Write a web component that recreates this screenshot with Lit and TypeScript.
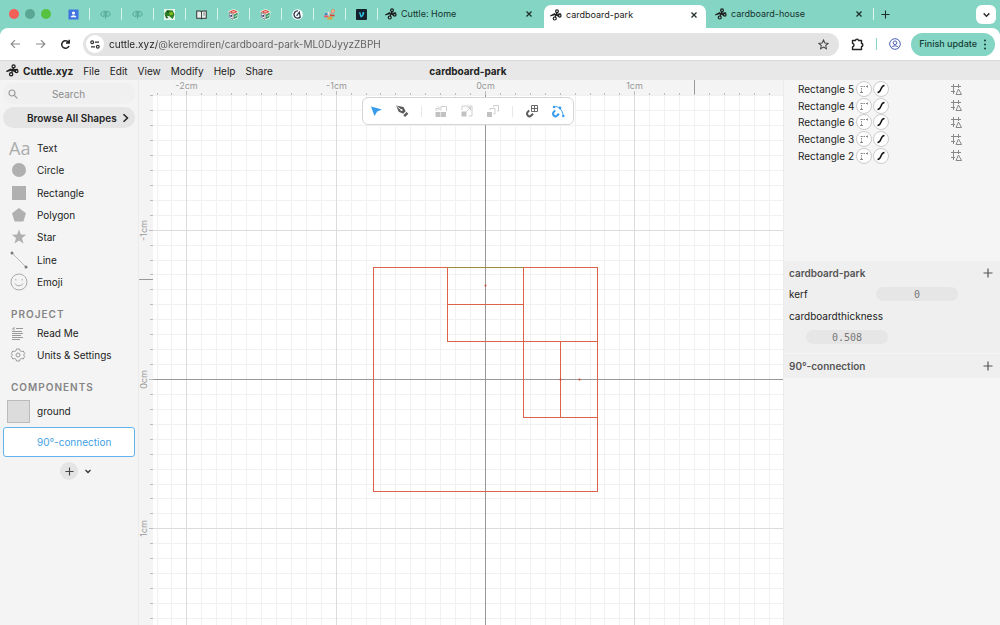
import { LitElement, html, svg, css } from "lit";
import { customElement, state } from "lit/decorators.js";

const scissors = (size: number) => html`<svg class="ico" width=${size} height=${size} viewBox="0 0 24 24" fill="none" stroke="#1d1d1d" stroke-width="2.4" stroke-linecap="round" aria-hidden="true">
  <circle cx="14" cy="4.400" r="2.800" /><circle cx="9.500" cy="19" r="3" />
  <path d="M1.500 13.500 11 11 21 9.800M14 7.200 12 11l-1.500 5M1.500 13.500 9 9.500" />
  <path d="M12 11l5 3" stroke-width="3" /><circle cx="19.500" cy="13.500" r="2.600" />
</svg>`;

const cross = html`<svg class="ico" width="8" height="8" viewBox="0 0 8 8" stroke="#1f2f2b" stroke-width="1.300" aria-hidden="true"><path d="M1.500 1.500l5 5M6.500 1.500l-5 5" /></svg>`;
const plus = (c: string, s = 10) => html`<svg class="ico" width=${s} height=${s} viewBox="0 0 10 10" stroke=${c} stroke-width="1.200" aria-hidden="true"><path d="M5 .5v9M.5 5h9" /></svg>`;
const chevron = (s: number) => html`<svg class="ico" width=${s} height=${s} viewBox="0 0 8 8" fill="none" stroke="#333" stroke-width="1.300" aria-hidden="true"><path d="M1.500 3 4 5.500 6.500 3" /></svg>`;

const wing = svg`<g fill="none" stroke="#5bb09c" stroke-width="1.200"><path d="M6 2v8.500M6 3.500C4 1 1.500 3.500 .8 6 2.500 9 5 8 6 7 7 8 9.500 9 11.200 6 10.500 3.500 8 1 6 3.500z"/><circle cx="6" cy="5.500" r="1.800"/></g>`;
const cube = svg`<path d="M6 0l5.500 2.400L10.800 10 6 12.200 1.200 10 .5 2.400z" fill="#f5fffc"/><path d="M6 .8l4.800 2.200L6 5.200 1.200 3z" fill="#e0483a"/><path d="M1.300 3.800 5.600 5.900V11.300L1.800 9.300z" fill="#fff" stroke="#444" stroke-width=".7"/><path d="M10.700 3.800 6.400 5.900V11.300L10.200 9.300z" fill="#3c9a68"/><circle cx="3.500" cy="7.500" r="1.100" fill="#2a3f86"/><path d="M7.500 8.500l2-2" stroke="#fff"/><path d="M4.500 3h3" stroke="#fff" stroke-width=".9"/>`;

const pinned: { name: string; art: unknown }[] = [
  { name: "Contacts", art: svg`<rect x=".5" y=".5" width="11" height="11" rx="1" fill="#3f73e0"/><circle cx="6" cy="4.400" r="1.700" fill="#fff"/><path d="M2.800 9c.6-3 5.800-3 6.400 0z" fill="#fff"/>` },
  { name: "Wing one", art: wing },
  { name: "Wing two", art: wing },
  { name: "Leaf", art: svg`<rect width="12" height="12" fill="#e9f8ee"/><path d="M.5 5l3-4 6 .5 2 4.500-2 5-4-3.500-4 1z" fill="#2e7d27"/><path d="M5 4l4-1 1 3-3 1z" fill="#86b91e"/><path d="M2 7l3 3H2zM3 2l3 1-2 2z" fill="#1b4e1b"/>` },
  { name: "Book", art: svg`<path d="M.8 2.200h4L6 3l1.200-.8h4V10H7.200L6 10.800 4.800 10h-4z" fill="#e8f1ee" stroke="#333" stroke-width="1.100"/><path d="M6 3v7.500" stroke="#333"/><path d="M7.800 4.500h2M7.800 6.500h2" stroke="#555" stroke-width=".8"/>` },
  { name: "Cube one", art: cube },
  { name: "Cube two", art: cube },
  { name: "Compass", art: svg`<circle cx="6" cy="6" r="5.800" fill="#fff"/><path d="M6.500 2A4 4 0 1 0 9.300 8.500" fill="none" stroke="#26344a" stroke-width="1.500"/><path d="M5 7.500 8 3.500 9 8.500" fill="none" stroke="#26344a" stroke-width="1.300"/>` },
  { name: "Blocks", art: svg`<path d="M1 4.500h3v2H1z" fill="#3a84c9"/><path d="M0 7h5v2H0z" fill="#e8586a"/><path d="M3.500 9h3v2.500h-3z" fill="#e0a52f"/><path d="M4 3h2v4H4z" fill="#e8d9d4"/><path d="M6.500 6h5v2h-5z" fill="#d8473b"/><path d="M6.500 8.500h2.500v3H6.500z" fill="#e0a52f"/><circle cx="9.800" cy="2.300" r="1.600" fill="#f7d0b8" stroke="#f0785a"/><path d="M6.500 6l2-2.500" stroke="#f0785a"/>` },
  { name: "Video", art: svg`<rect width="12" height="12" rx="1" fill="#14202b"/><path d="M3 4l1.600-.8L6 7.200C7.300 5.500 7.300 4.800 6.500 4.500 7.200 3 9.200 2.800 9 4.700 8.800 6.500 6.800 9.300 5.500 9.200 4.500 9 4.200 5.500 3 4z" fill="#2cc0e8"/>` },
];

const shapes: { name: string; art: unknown }[] = [
  { name: "Text", art: html`<span class="aa" aria-hidden="true">Aa</span>` },
  { name: "Circle", art: html`<svg width="20" height="20" aria-hidden="true"><circle cx="10" cy="10" r="7" fill="#b0b0b0" /></svg>` },
  { name: "Rectangle", art: html`<svg width="20" height="20" aria-hidden="true"><rect x="3" y="3" width="14" height="14" fill="#b0b0b0" /></svg>` },
  { name: "Polygon", art: html`<svg width="20" height="20" aria-hidden="true"><path d="M10 3l7 5.200L14.400 16.500H5.600L3 8.200z" fill="#b0b0b0" /></svg>` },
  { name: "Star", art: html`<svg width="20" height="20" aria-hidden="true"><path d="M10 2.500l1.900 5 5.300.3-4.200 3.300 1.500 5.300L10 13.500l-4.500 2.900L7 11.100 2.800 7.800l5.300-.3z" fill="#b0b0b0" /></svg>` },
  { name: "Line", art: html`<svg width="20" height="20" aria-hidden="true"><path d="M3 3l14 14" stroke="#b8b8b8" /><circle cx="3" cy="3" r="1.500" fill="#777" /><circle cx="17" cy="17" r="1.500" fill="#777" /></svg>` },
  { name: "Emoji", art: html`<svg width="20" height="20" fill="none" stroke="#aaa" aria-hidden="true"><circle cx="10" cy="10" r="8" /><path d="M6 11.500c1.500 3 6.500 3 8 0M6 7.800h1.500M12.500 7.800h1.500" /></svg>` },
];

const STEP = 14.93;
const ORIGIN = { x: 346.5, y: 299.5 };
const ticks = Array.from({ length: 241 }, (_, i) => i - 80);
const at = (i: number) => Math.round(i * STEP);

@customElement("app-root")
export class AppRoot extends LitElement {
  @state() private tool = "select";
  @state() private component = "90°-connection";

  static styles = css`
    :host { display: flex; flex-direction: column; height: 100vh; overflow: hidden; background: #f5f5f5; color: #222; font: 10px/14px Inter, "Open Sans", sans-serif; }
    *, *::before, *::after { box-sizing: border-box; }
    button { font: inherit; color: inherit; border: 0; background: none; padding: 0; margin: 0; display: flex; align-items: center; }
    a { color: inherit; text-decoration: none; }
    input { font: inherit; color: inherit; border: 0; outline: 0; margin: 0; padding: 0; min-width: 0; }
    svg { display: block; flex: none; }
    h1, h2, ul { margin: 0; padding: 0; font: inherit; list-style: none; }

    .strip { flex: none; display: flex; height: 34px; margin-bottom: -6px; background: #84d5c4; font-size: 9px; }
    .lights { display: flex; gap: 6px; padding: 9px 0 0 9px; width: 57px; }
    .light { width: 10px; height: 10px; border-radius: 50%; background: #f25f58; }
    .light.idle { background: #5aa695; }
    .light.go { background: #57c23f; }
    .pins { display: flex; height: 28px; }
    .pin { width: 32px; justify-content: center; position: relative; }
    .pin::after { content: ""; width: 1px; height: 12px; background: #d6f2ec; position: absolute; right: -1px; top: 8px; }
    .tabs { display: flex; }
    .tab { width: 164px; height: 28px; display: flex; align-items: center; gap: 4px; padding: 0 7px 0 9px; color: #16332d; }
    .tab:first-of-type { width: 167px; padding-right: 11px; padding-left: 8px; }
    .tab a { flex: 1; }
    .tab.on { width: 162px; padding: 0 8px 5px 6px; background: #fff; height: 24px; margin-top: 5px; border-radius: 7px 7px 0 0; color: #222; }
    .more { display: flex; height: 28px; align-items: center; gap: 7px; padding-left: 3px; }
    .bar { width: 1px; height: 12px; background: #e1f6f1; }
    .menu { margin: 5px 4px 0 auto; width: 20px; height: 19px; border-radius: 6px; background: #fff; justify-content: center; }

    .nav { flex: none; position: relative; display: flex; align-items: center; height: 32px; padding: 0 5px 0 10px; background: #fff; border-radius: 8px 8px 0 0; }
    .steps { display: flex; gap: 14px; width: 73px; }
    .addr { flex: 1; display: flex; align-items: center; height: 23px; gap: 5px; padding: 0 10px 0 3px; border-radius: 12px; background: #e3e3e3; }
    .site { width: 18px; height: 18px; border-radius: 50%; background: #fff; justify-content: center; }
    .url { flex: 1; height: 18px; background: linear-gradient(90deg, #222 48px, #5c5c5c 48px); background-clip: text; -webkit-background-clip: text; color: transparent; }
    .exts { display: flex; align-items: center; gap: 12px; padding: 0 10px 0 12px; }
    .exts .bar { background: #84d5c4; }
    .update { height: 23px; padding: 0 8px 0 8px; gap: 6px; border-radius: 12px; background: #84d5c4; font-size: 9px; font-weight: 500; color: #143d34; }

    .app { flex: none; display: grid; grid-template-columns: 153px 1fr 217px; align-items: center; height: 20px; border-top: 1px solid #d9d9d9; background: #e8e8e8; }
    .menus { grid-area: 1 / 1 / 2 / 3; display: flex; align-items: center; gap: 10px; padding-left: 6px; }
    .brand { display: flex; align-items: center; gap: 4px; font-weight: 700; }
    .title { grid-area: 1 / 2; justify-self: center; font-weight: 700; }

    .main { flex: 1; min-height: 0; display: grid; grid-template-columns: 138px 1fr 217px; }
    .side { display: flex; flex-direction: column; padding: 3px 3px 0; background: #f4f4f4; }
    .find { display: flex; align-items: center; height: 21px; padding: 0 5px; border-radius: 11px; background: #f0f0f0; }
    .find input { flex: 1; background: none; text-align: center; }
    .find input::placeholder { color: #8c8c8c; }
    .browse { height: 21px; margin-top: 3px; padding: 0 6px 0 24px; justify-content: space-between; border-radius: 11px; background: #e5e5e5; font-weight: 600; }
    .shapes { display: grid; grid-auto-rows: 1fr; height: 156px; margin-top: 9px; }
    .row { width: 100%; height: 100%; gap: 8px; padding-left: 6px; text-align: left; }
    .row > :first-child { width: 20px; flex: none; }
    .aa { font: 400 18px/20px "Open Sans", sans-serif; color: #acacac; }
    .head { margin: 14px 0 1px 8px; font-weight: 600; letter-spacing: 1px; color: #858585; }
    .proj { display: grid; grid-auto-rows: 22px; }
    .comps { display: grid; gap: 1px; padding-top: 1px; }
    .comp { width: 132px; height: 30px; padding-left: 33px; border: 1px solid transparent; border-radius: 3px; }
    .comp.on { background: #fff; border-color: #63b3ef; color: #3f9fe5; }
    .thumb { width: 23px; height: 23px; margin: 0 7px 0 -30px; border: 1px solid #bbb; background: #dcdcdc; }
    .add { display: flex; align-items: center; justify-content: center; gap: 6px; margin-top: 5px; padding-left: 14px; }
    .round { width: 18px; height: 18px; border-radius: 50%; background: #e4e4e4; justify-content: center; }

    .canvas { position: relative; overflow: hidden; border-left: 1px solid #ececec; background: #fff; }
    .sheet { width: 100%; height: 100%; position: absolute; inset: 0; }
    .sheet text { font: 9px Inter, sans-serif; fill: #999; text-anchor: middle; }
    .float { position: absolute; inset: 17px 0 auto 14px; display: flex; justify-content: center; }
    .tools { display: flex; align-items: center; width: 212px; height: 28px; padding-right: 2px; border: 1px solid #d5d5d5; border-radius: 6px; background: #fff; }
    .tools button { width: 26px; height: 26px; justify-content: center; color: #c2c2c2; }
    .tools .dark { color: #5c5c5c; }
    .tools .blue { color: #369bec; }
    .split { flex: 1; display: flex; justify-content: center; }
    .split::before { content: ""; width: 1px; height: 11px; background: #e8e8e8; }

    .panel { display: flex; flex-direction: column; border-left: 1px solid #ececec; background: #f5f5f5; }
    .layers { display: grid; grid-auto-rows: 1fr; height: 84px; padding: 1px 0 0 14px; margin-bottom: 97px; }
    .layer { display: flex; align-items: center; gap: 1px; }
    .layer .name { width: 57px; }
    .disc { width: 16px; height: 16px; border: 1px solid #ccc; border-radius: 50%; background: #fff; justify-content: center; }
    .snap { margin: 0 38px 0 auto; }
    .group { background: #efefef; padding: 0 7px 0 5px; }
    .group + .group { border-top: 1px solid #f5f5f5; }
    .cap { display: flex; justify-content: space-between; align-items: center; height: 24px; font-weight: 600; color: #555; }
    .field { display: flex; flex-wrap: wrap; align-items: center; }
    .field label { width: 87px; line-height: 18px; }
    .field input { width: 82px; height: 14px; border-radius: 7px; background: #e6e6e6; text-align: center; font: 10px "DejaVu Sans Mono", monospace; color: #777; }
    .field.wide { padding: 4px 0 9px; row-gap: 5px; }
    .field.wide label { width: 100%; }
    .field.wide input { margin-left: 17px; }
  `;

  private pick(tool: string) { this.tool = tool; }

  private toolButton(id: string, label: string, cls: string, art: unknown) {
    return html`<button class=${cls} aria-label=${label} aria-pressed=${this.tool === id} @click=${() => this.pick(id)}>
      <svg width="14" height="14" viewBox="0 0 14 14" fill="none" stroke="currentColor" aria-hidden="true">${art}</svg></button>`;
  }

  private sheet() {
    return html`<svg class="sheet" role="img" aria-label="Drawing canvas">
      <g transform="translate(${ORIGIN.x} ${ORIGIN.y})">
        ${ticks.map((i) => i % 10 ? svg`<path d="M${at(i)} -400V4000M-400 ${at(i)}H4000" stroke="#f1f1f1"/>` : "")}
        ${ticks.map((i) => i % 10 === 0 && i ? svg`<path d="M${at(i)} -400V4000M-400 ${at(i)}H4000" stroke="#dcdcdc"/>` : "")}
        <path d="M0 -400V4000M-400 0H4000" stroke="#989898" />
        <g fill="none" stroke="#dc6248">
          <rect x="-112" y="-112" width="224" height="224" />
          <rect x="-38" y="-112" width="76" height="74" />
          <rect x="38" y="-38" width="74" height="76" />
          <rect x="-38" y="-112" width="76" height="37" />
          <rect x="75" y="-38" width="37" height="76" />
          <path d="M-38 -112H38" stroke="#a08a3c" />
        </g>
        <g fill="#c8452c"><circle cx="0" cy="-94" r="1" /><circle cx="94" cy="0" r="1" /><circle cx="75" cy="0" r="1" /></g>
      </g>
      <rect width="100%" height="15" fill="#f4f4f4" />
      <rect width="14" height="100%" fill="#f4f4f4" />
      <g stroke="#bdbdbd">
        ${ticks.map((i) => svg`${at(i) + ORIGIN.x > 14 ? svg`<path d="M${at(i) + ORIGIN.x} ${i % 10 ? 13 : 11}v${i % 10 ? 2 : 4}"/>` : ""}${at(i) + ORIGIN.y > 15 ? svg`<path d="M${i % 10 ? 11 : 10} ${at(i) + ORIGIN.y}H14"/>` : ""}`)}
      </g>
      <path d="M555.500 0V14M0 199.500H14" stroke="#999" />
      ${[-2, -1, 0, 1].map((n) => svg`<text x=${at(n * 10) + ORIGIN.x} y="9">${n}cm</text>`)}
      ${[-1, 0, 1].map((n) => svg`<text transform="translate(8 ${at(n * 10) + ORIGIN.y}) rotate(-90)">${n}cm</text>`)}
    </svg>`;
  }

  render() {
    return html`
      <header class="strip">
        <div class="lights"><span class="light"></span><span class="light idle"></span><span class="light go"></span></div>
        <div class="pins">${pinned.map((p) => html`<button class="pin" aria-label=${p.name}><svg width="11" height="11" viewBox="0 0 12 12" aria-hidden="true">${p.art}</svg></button>`)}</div>
        <nav class="tabs">
          ${["Cuttle: Home", "cardboard-park", "cardboard-house"].map((t, i) => html`<div class="tab ${i === 1 ? "on" : ""}">${scissors(12)}<a href="#">${t}</a><button aria-label="Close ${t}">${cross}</button></div>`)}
        </nav>
        <div class="more"><span class="bar"></span><button aria-label="New tab">${plus("#1f2f2b", 9)}</button></div>
        <button class="menu" aria-label="Search tabs">${chevron(9)}</button>
      </header>

      <div class="nav">
        <div class="steps">
          <button aria-label="Back"><svg width="11" height="10" fill="none" stroke="#8b8b8b" stroke-width="1.200" aria-hidden="true"><path d="M10 5H1.500M5 1.200 1.200 5 5 8.800" /></svg></button>
          <button aria-label="Forward"><svg width="11" height="10" fill="none" stroke="#8b8b8b" stroke-width="1.200" aria-hidden="true"><path d="M1 5h8.500M6 1.200 9.800 5 6 8.800" /></svg></button>
          <button aria-label="Reload"><svg width="11" height="11" viewBox="0 0 11 11" fill="none" stroke="#222" stroke-width="1.500" aria-hidden="true"><path d="M9 7A3.800 3.800 0 1 1 8.500 3.200M9.200 .8v3.200H6" /></svg></button>
        </div>
        <div class="addr">
          <button class="site" aria-label="Site information"><svg width="10" height="9" fill="none" stroke="#333" stroke-width="1.200" aria-hidden="true"><circle cx="2.200" cy="2.200" r="1.400" /><path d="M5 2.200h4M1 6.800h4" /><circle cx="7.800" cy="6.800" r="1.400" /></svg></button>
          <input class="url" aria-label="Address" value="cuttle.xyz/@keremdiren/cardboard-park-ML0DJyyzZBPH" />
          <button aria-label="Bookmark"><svg width="11" height="11" viewBox="0 0 12 12" fill="none" stroke="#444" stroke-width="1.100" aria-hidden="true"><path d="M6 1l1.500 3.300 3.600.4-2.700 2.400.8 3.500L6 8.800l-3.200 1.800.8-3.500L.9 4.700l3.600-.4z" /></svg></button>
        </div>
        <div class="exts">
          <button aria-label="Extensions"><svg width="13" height="13" viewBox="0 0 13 13" fill="none" stroke="#222" stroke-width="1.400" stroke-linejoin="round" aria-hidden="true"><path d="M1.500 2.500H4.500C4.500 .6 7.500 .6 7.500 2.500H10.500V5.500C12.300 5.500 12.300 8.500 10.500 8.500V11.500H1.500V9C3.500 8.500 3.500 5.700 1.500 5.200z" /></svg></button>
          <span class="bar"></span>
          <button aria-label="Profile"><svg width="12" height="12" viewBox="0 0 12 12" fill="none" stroke="#4a62b5" aria-hidden="true"><circle cx="6" cy="6" r="5.300" /><circle cx="6" cy="4.800" r="1.800" /><path d="M2.500 9.500c1.500-2.200 5.500-2.200 7 0" /></svg></button>
        </div>
        <button class="update">Finish update<svg width="4" height="11" fill="#143d34" aria-hidden="true"><circle cx="2" cy="1.500" r="1" /><circle cx="2" cy="5.500" r="1" /><circle cx="2" cy="9.500" r="1" /></svg></button>
      </div>

      <div class="app">
        <div class="menus"><a class="brand" href="#">${scissors(13)}Cuttle.xyz</a>${["File", "Edit", "View", "Modify", "Help", "Share"].map((m) => html`<button>${m}</button>`)}</div>
        <h1 class="title">cardboard-park</h1>
      </div>

      <main class="main">
        <aside class="side">
          <label class="find"><svg width="10" height="10" fill="none" stroke="#999" stroke-width="1.200" aria-hidden="true"><circle cx="4" cy="4" r="3" /><path d="M6.300 6.300 9.300 9.300" /></svg><input type="search" aria-label="Search" placeholder="Search" /></label>
          <button class="browse">Browse All Shapes<svg width="7" height="10" fill="none" stroke="#222" stroke-width="1.500" aria-hidden="true"><path d="M1.500 1.200 5.500 5 1.500 8.800" /></svg></button>
          <div class="shapes">${shapes.map((s) => html`<button class="row">${s.art}<span>${s.name}</span></button>`)}</div>
          <h2 class="head">PROJECT</h2>
          <div class="proj">
            <button class="row"><svg width="20" height="14" stroke="#999" aria-hidden="true"><path d="M7 2.500h7M3 5.500h10M3 7.500h11M3 9.500h9M3 11.500h11M3 13.500h8M3 3.500l2-2v3" fill="none" /></svg><span>Read Me</span></button>
            <button class="row"><svg width="20" height="14" viewBox="-10 -7 20 14" fill="none" stroke="#999" aria-hidden="true"><g transform="translate(-1 0)"><circle r="2" /><path d="M-1.500 -6h3l.5 1.700 1.500.8 1.700-.5 1.500 2.600L5.500 0l1.200 1.400-1.500 2.600-1.700-.5-1.500.8L1.500 6h-3l-.5-1.700-1.500-.8-1.700.5-1.500-2.600L-5.500 0l-1.200-1.400 1.500-2.600 1.700.5 1.500-.8z" stroke-linejoin="round" /></g></svg><span>Units &amp; Settings</span></button>
          </div>
          <h2 class="head">COMPONENTS</h2>
          <div class="comps">${["ground", "90°-connection"].map((c, i) => html`<button class="comp ${this.component === c ? "on" : ""}" @click=${() => (this.component = c)}>${i ? "" : html`<span class="thumb"></span>`}${c}</button>`)}</div>
          <div class="add"><button class="round" aria-label="Add component">${plus("#444", 9)}</button><button aria-label="More component types">${chevron(8)}</button></div>
        </aside>

        <section class="canvas">
          ${this.sheet()}
          <div class="float"><div class="tools">
            ${this.toolButton("select", "Select", "blue", svg`<path d="M2 2.500l11 3-4.800 2L5.500 12z" fill="currentColor" stroke="none"/>`)}
            ${this.toolButton("pen", "Pen", "dark", svg`<path d="M1 1.500l7.500 1.500 2.200 4.200-2.500 2.500-4.500-2z" fill="currentColor" stroke="none"/><path d="M1.500 2l4.500 3.800" stroke="#fff" stroke-width=".9"/><circle cx="6.500" cy="6" r="1" fill="#fff" stroke="none"/><path d="M12.500 8.800 9.200 12.200" stroke-width="2.500"/>`)}
            <span class="split"></span>
            ${this.toolButton("rotate", "Rotate", "", svg`<path d="M1.500 8h5v5h-5zM7 8h5v5H7z" fill="currentColor" stroke="none"/><path d="M2 7V4.500h3M7 6.500V2.500h5.500V7M4 2.500 6 4.500 4 6.500" stroke-width=".8"/>`)}
            ${this.toolButton("scale", "Scale", "", svg`<path d="M1.500 7.500h5v5h-5z" fill="currentColor" stroke="none"/><path d="M2 6V2h10v10H8.500M6.500 7.500l4-4M7.500 3.500h3v3" stroke-width=".8"/>`)}
            ${this.toolButton("repeat", "Repeat", "", svg`<path d="M1 8h5v5H1z" fill="currentColor" stroke="none"/><path d="M4 6V4.500h5V10H7.500M7.500 3V1.500h5V7H11" stroke-width=".8"/>`)}
            <span class="split"></span>
            ${this.toolButton("grid", "Snap to grid", "dark", svg`<path d="M4.200 6.300 2.500 8.200c-1.500 3 1.500 5.200 3.500 3.500L8 9.800" stroke-width="2"/><path d="M6.500 1.500h6v6h-6zM9.500 1.500v6M6.500 4.500h6" stroke-width=".9"/>`)}
            ${this.toolButton("geometry", "Snap to geometry", "blue", svg`<path d="M4.200 6.300 2.500 8.200c-1.500 3 1.500 5.200 3.500 3.500L8 9.800" stroke-width="2"/><path d="M2.500 3Q10 .5 12.500 12" stroke-width=".9"/><circle cx="3" cy="3" r="1.200" fill="currentColor" stroke="none"/><circle cx="9" cy="4" r="1.400" fill="currentColor" stroke="none"/><circle cx="12.300" cy="12" r="1.200" fill="currentColor" stroke="none"/>`)}
          </div></div>
        </section>

        <aside class="panel">
          <ul class="layers">${[5, 4, 6, 3, 2].map((n) => html`<li class="layer"><span class="name">Rectangle ${n}</span>
            <button class="disc" aria-label="Transform"><svg width="10" height="10" fill="none" stroke="#888" aria-hidden="true"><path d="M2.500 8V2.500H8" stroke-dasharray="1.500 1" /><path d="M1 8.500h3M1.500 2.500h2M8.500 1.500v2" /></svg></button>
            <button class="disc" aria-label="Stroke"><svg width="10" height="10" fill="none" stroke="#111" stroke-width="1.500" aria-hidden="true"><path d="M1.500 8.500C6 8.500 4 1.500 8.500 1.500" /></svg></button>
            <button class="snap" aria-label="Guides"><svg width="11" height="11" fill="none" stroke="#888" aria-hidden="true"><path d="M2.500 0v10M7.500 0v4M0 2.500h10M0 7.500h4M7.500 5 5 10.500h5.500z" /></svg></button></li>`)}</ul>
          <section class="group">
            <div class="cap"><h2>cardboard-park</h2><button aria-label="Add parameter">${plus("#555")}</button></div>
            <div class="field"><label for="kerf">kerf</label><input id="kerf" value="0" /></div>
            <div class="field wide"><label for="thick">cardboardthickness</label><input id="thick" value="0.508" /></div>
          </section>
          <section class="group">
            <div class="cap"><h2>90°-connection</h2><button aria-label="Add parameter to component">${plus("#555")}</button></div>
          </section>
        </aside>
      </main>`;
  }
}
